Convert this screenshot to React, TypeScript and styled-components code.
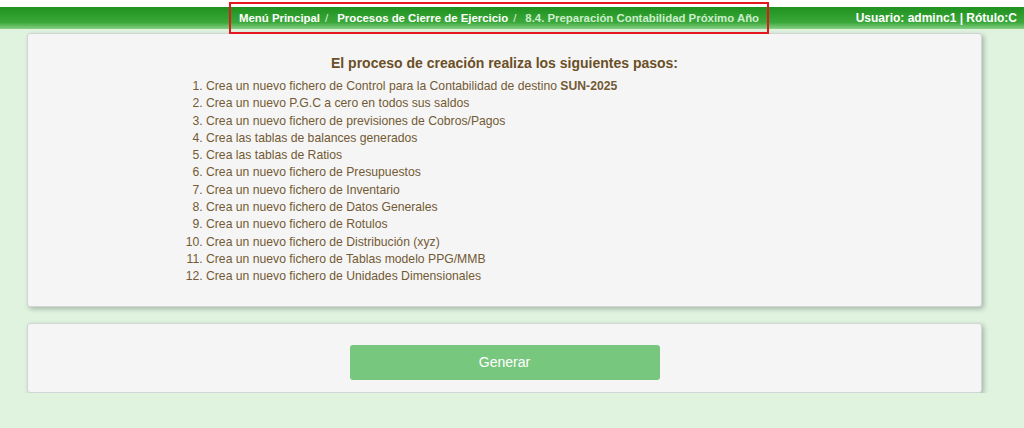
import styled, { createGlobalStyle } from "styled-components";

const GlobalStyle = createGlobalStyle`
    body {
        margin: 0;
        background-color: #dff3df;
        font-family: "Liberation Sans", Arial, sans-serif;
    }
`

const Top = styled.div`
    background-color: #ffffff;
    padding-top: 7px;
`

const Header = styled.header`
    display: flex;
    align-items: center;
    justify-content: space-between;
    height: 22px;
    padding: 0 7px 0 234px;
    background: linear-gradient(#1f911f, #3aa83a 70%, #86cf86);
    color: #ffffff;
    font-size: 12px;
    font-weight: bold;
`

const Crumbs = styled.nav`
    display: flex;
    align-items: center;
    height: 22px;
    padding: 0 5px 0 5px;
    font-size: 11.4px;
    outline: 2px solid #e5161d;
    outline-offset: 3px;
`

const Crumb = styled.span<{ $current?: boolean }>`
    color: ${(p) => (p.$current ? "#cdeecd" : "#ffffff")};
`

const Sep = styled.span`
    color: #d8f0d8;
    font-weight: normal;
    margin: 0 9px 0 5px;
`

const User = styled.div`
    white-space: nowrap;
`

const Card = styled.section`
    margin: 0 42px 0 27px;
    background-color: #f5f5f5;
    border: 1px solid #d2d4d8;
    border-radius: 3px;
    box-shadow: 2px 2px 5px rgba(0, 0, 0, 0.25);
`

const StepsCard = styled(Card)`
    margin-top: 4px;
    padding: 20px 20px 20px;
`

const ActionCard = styled(Card)`
    margin-top: 16px;
    padding: 21px 0 12px;
    display: flex;
    justify-content: center;
`

const Title = styled.h2`
    margin: 0 0 6px;
    text-align: center;
    font-size: 14px;
    line-height: 18px;
    color: #6b4f26;
`

const Steps = styled.ol`
    margin: 0;
    padding-left: 158px;
    font-size: 12.2px;
    line-height: 17.3px;
    color: #735a34;
`

const Button = styled.button`
    width: 310px;
    height: 35px;
    border: none;
    border-radius: 3px;
    background-color: #78c77f;
    color: #ffffff;
    font-family: "Liberation Sans", Arial, sans-serif;
    font-size: 14px;
`

const steps = [
    "Crea un nuevo P.G.C a cero en todos sus saldos",
    "Crea un nuevo fichero de previsiones de Cobros/Pagos",
    "Crea las tablas de balances generados",
    "Crea las tablas de Ratios",
    "Crea un nuevo fichero de Presupuestos",
    "Crea un nuevo fichero de Inventario",
    "Crea un nuevo fichero de Datos Generales",
    "Crea un nuevo fichero de Rotulos",
    "Crea un nuevo fichero de Distribución (xyz)",
    "Crea un nuevo fichero de Tablas modelo PPG/MMB",
    "Crea un nuevo fichero de Unidades Dimensionales",
]

export default function App() {
    return (
        <>
            <GlobalStyle />
            <Top>
                <Header>
                    <Crumbs>
                        <Crumb>Menú Principal</Crumb>
                        <Sep>/</Sep>
                        <Crumb>Procesos de Cierre de Ejercicio</Crumb>
                        <Sep>/</Sep>
                        <Crumb $current>8.4. Preparación Contabilidad Próximo Año</Crumb>
                    </Crumbs>
                    <User>Usuario: adminc1 | Rótulo:C</User>
                </Header>
            </Top>
            <StepsCard>
                <Title>El proceso de creación realiza los siguientes pasos:</Title>
                <Steps>
                    <li>Crea un nuevo fichero de Control para la Contabilidad de destino <b>SUN-2025</b></li>
                    {steps.map((s) => <li key={s}>{s}</li>)}
                </Steps>
            </StepsCard>
            <ActionCard>
                <Button>Generar</Button>
            </ActionCard>
        </>
    );
}
